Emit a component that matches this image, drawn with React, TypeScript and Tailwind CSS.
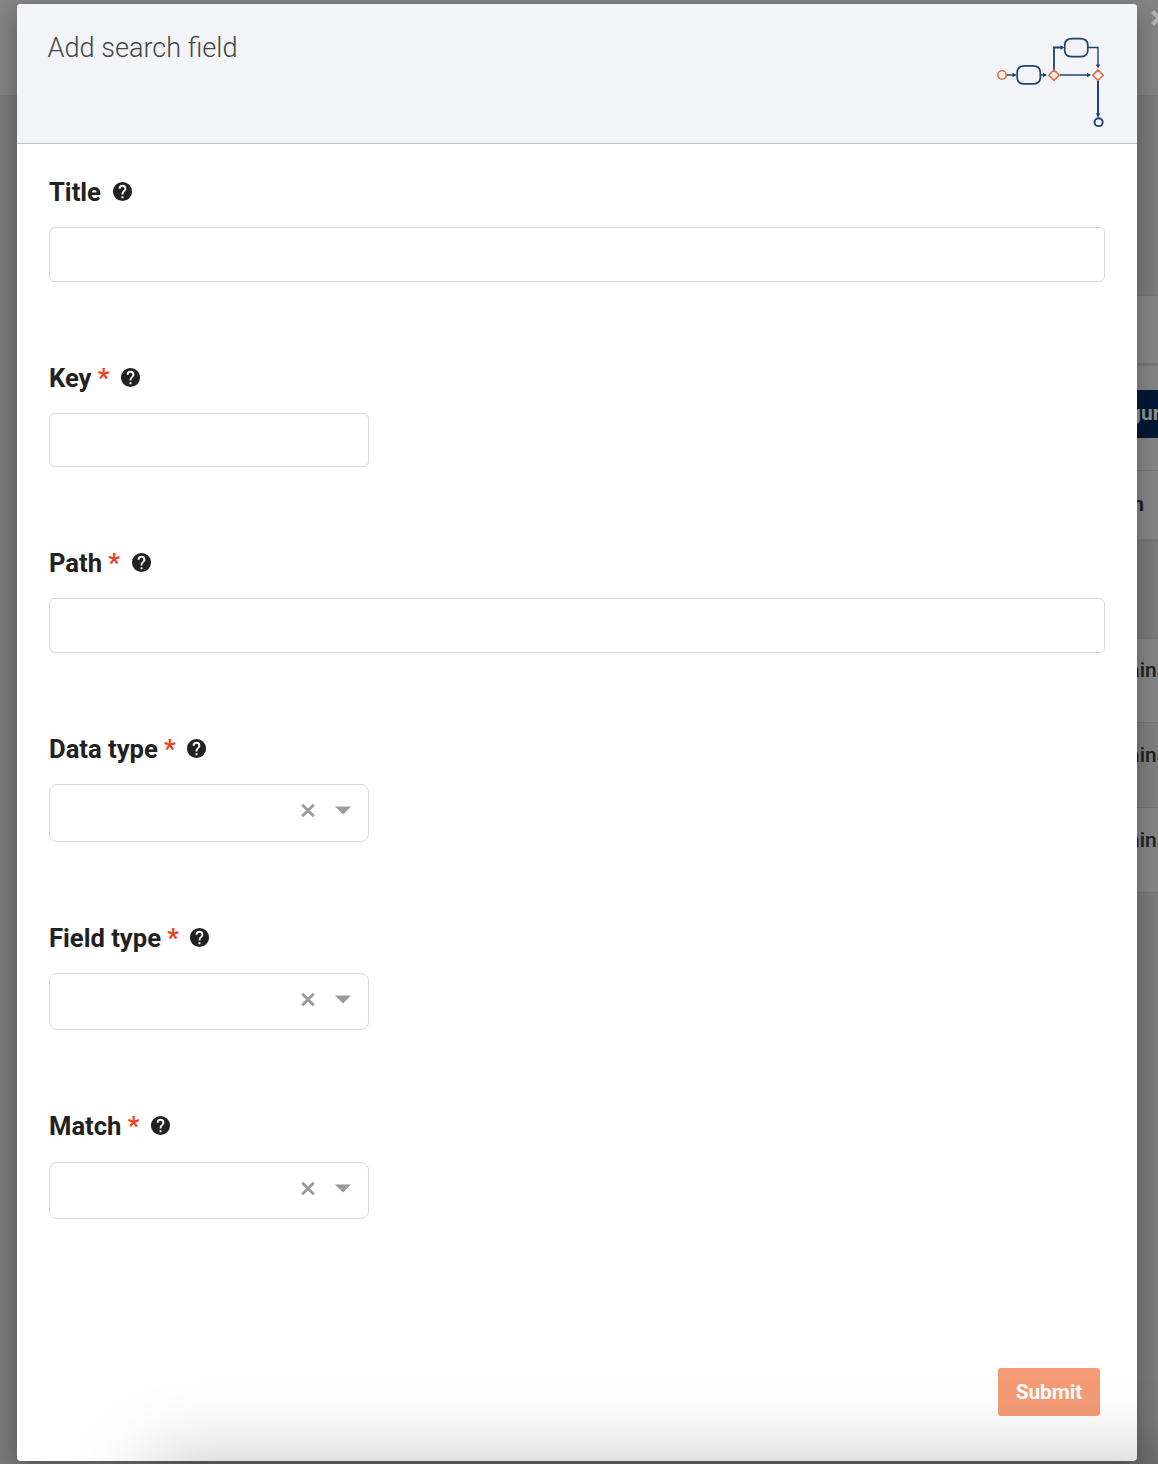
import React from "react";

type Field = {
  label: string;
  required?: boolean;
  kind: "wide" | "short" | "select";
  block: string;
  box: string;
};

const fields: Field[] = [
  { label: "Title", kind: "wide", block: "h-[186px]", box: "h-[55px]" },
  { label: "Key", required: true, kind: "short", block: "h-[185px]", box: "h-[54px]" },
  { label: "Path", required: true, kind: "wide", block: "h-[186px]", box: "h-[55px]" },
  { label: "Data type", required: true, kind: "select", block: "h-[189px]", box: "h-[58px]" },
  { label: "Field type", required: true, kind: "select", block: "h-[188px]", box: "h-[57px]" },
  { label: "Match", required: true, kind: "select", block: "h-[181px]", box: "h-[57px] mt-px" },
];

function HelpIcon() {
  return (
    <svg viewBox="0 0 24 24" className="size-[23px] shrink-0" fill="#212121">
      <path d="M15.07 11.25l-.9.92C13.45 12.89 13 13.5 13 15h-2v-.5c0-1.11.45-2.11 1.17-2.83l1.24-1.26c.37-.36.59-.86.59-1.41a2 2 0 1 0-4 0H8a4 4 0 1 1 8 0c0 .88-.36 1.67-.93 2.25M13 19h-2v-2h2M12 2a10 10 0 1 0 0 20 10 10 0 0 0 0-20Z" />
    </svg>
  );
}

function FlowLogo() {
  return (
    <svg viewBox="0 0 112 96" className="h-[96px] w-[112px]" fill="none">
      <g stroke="#1d4172">
        <path d="M10.500 41h9M45 41h5M64 41h30" strokeWidth="1.4" />
        <path d="M58 36V13.500h7" strokeWidth="1.8" />
        <path d="M92 13.500h10V32" strokeWidth="1.4" />
        <path d="M102 46.500v35" strokeWidth="2" />
        <path d="M29 31.900h7.500q7.800 0 7.800 6.500v5q0 6.500-7.800 6.500h-7.500q-7.800 0-7.800-6.500v-5q0-6.500 7.800-6.500Z" strokeWidth="1.7" />
        <path d="M76.500 4.700h7.500q7.800 0 7.800 6.500v5q0 6.500-7.800 6.500h-7.500q-7.800 0-7.800-6.500v-5q0-6.500 7.800-6.500Z" strokeWidth="1.700" />
        <ellipse cx="102.600" cy="88.200" rx="4.100" ry="3.900" strokeWidth="1.900" />
      </g>
      <g fill="#1d4172">
        <path d="M16.500 38.800l4 2.200-4 2.200ZM47 38.800l4 2.200-4 2.200ZM91 38.800l4 2.200-4 2.200ZM64.500 11.300l4 2.200-4 2.200ZM99.800 30.500h4.400l-2.200 4ZM99.800 79.500h4.400l-2.200 4Z" />
      </g>
      <g stroke="#e2703f" strokeWidth="1.6">
        <circle cx="6" cy="41" r="4.200" />
        <path d="M58 36l5.200 5.200-5.200 5.200-5.200-5.200ZM102 36l5.200 5.200-5.200 5.200-5.200-5.200Z" />
      </g>
    </svg>
  );
}

function FormField({ field }: { field: Field }) {
  return (
    <div className={`flex flex-col items-start ${field.block}`}>
      <div className="flex h-[51px] w-full shrink-0 items-start text-[25.6px] leading-[32px] font-bold text-[#212121]">
        <span>{field.label}</span>
        {field.required && <span className="ml-[6.2px] text-[#f1401f]">*</span>}
        <span className="ml-[9.7px] flex h-[31px] items-center">
          <HelpIcon />
        </span>
      </div>
      {field.kind === "select" ? (
        <div
          className={`flex w-[320px] shrink-0 items-start justify-end rounded-[8px] border border-[#d9d9d9] bg-white pt-[17px] pr-[17px] ${field.box}`}
        >
          <svg viewBox="0 0 16 16" className="mr-[19.5px] size-4" stroke="#9b9b9b" strokeWidth="2.8" fill="none">
            <path d="M2.200 2.700l11.600 11.600M13.800 2.700L2.200 14.300" />
          </svg>
          <svg viewBox="0 0 16 16" className="size-4" fill="#9b9b9b">
            <path d="M0 4.500h16l-8 8Z" />
          </svg>
        </div>
      ) : (
        <input
          type="text"
          aria-label={field.label}
          className={`rounded-[6px] border border-[#d9d9d9] bg-white px-4 ${field.kind === "wide" ? "w-full" : "w-[320px]"} ${field.box}`}
        />
      )}
    </div>
  );
}

function PageBehind() {
  return (
    <div className="flex h-full flex-col bg-[#7b7b7b] text-[21px] text-[#202020]">
      <div className="flex h-[96px] justify-end border-b border-[#757575] bg-[#848484] pt-[10px]">
        <svg viewBox="0 0 16 16" className="-mr-[9px] size-4" stroke="#b3b3b3" strokeWidth="4" fill="none">
          <path d="M1.500 1.500l13 13M14.500 1.500l-13 13" />
        </svg>
      </div>
      <div className="ml-[60px] flex flex-col pt-[199px]">
        <div className="h-[71px] border-t border-b-[3px] border-[#777777] bg-[#868686]" />
        <div className="flex h-[104px] flex-col items-end bg-[#868686] pt-[24px]">
          <div className="flex h-[48px] w-[30px] items-center overflow-hidden bg-[#041835] pl-[1px] font-bold text-[#929292]">
            gur
          </div>
        </div>
        <div className="flex h-[72px] items-center justify-end border-t border-b-[3px] border-[#777777] bg-[#868686] pr-[14px] font-bold">
          n
        </div>
        <div className="h-[95px]" />
        <div className="flex h-[86px] items-center justify-end border-t-2 border-b border-[#757575] bg-[#868686] pb-[19px] font-medium">
          <span className="-mr-[9.5px]">ains</span>
        </div>
        <div className="flex h-[85px] items-center justify-end border-b border-[#757575] bg-[#7f7f7f] pb-[18px] font-medium">
          <span className="-mr-[9.5px]">ains</span>
        </div>
        <div className="flex h-[85px] items-center justify-end border-b border-[#757575] bg-[#868686] pb-[18px] font-medium">
          <span className="-mr-[9.5px]">ains</span>
        </div>
      </div>
    </div>
  );
}

export default function App() {
  return (
    <div className="relative h-[1464px] w-full overflow-hidden font-['Roboto',sans-serif]">
      <PageBehind />

      <div className="absolute inset-0 flex flex-col pt-[4px] pr-[21px] pb-[3px] pl-[17px]">
        <div
          role="dialog"
          className="flex flex-1 flex-col overflow-hidden rounded-[4px] bg-white shadow-[0_8px_24px_0_rgba(0,0,0,0.33)]"
        >
          <header className="flex h-[140px] shrink-0 items-start justify-between border-b border-[#bfc2ca] bg-[#f2f4f8] pr-[29px] pl-[30.5px]">
            <h1 className="mt-[27px] text-[27.100px] leading-[34px] font-light text-[#444]">Add search field</h1>
            <div className="mt-[30px]">
              <FlowLogo />
            </div>
          </header>
          <form className="flex flex-1 flex-col px-[32px] pt-[32px]">
            {fields.map((f) => (
              <FormField key={f.label} field={f} />
            ))}
            <div className="mt-[77px] flex justify-end pr-[5px]">
              <button
                type="button"
                className="h-[48px] w-[102px] rounded-[3px] bg-[#f49b76] pt-[2px] text-[20.8px] font-bold text-white"
              >
                Submit
              </button>
            </div>
          </form>
        </div>
      </div>

      <div className="pointer-events-none absolute top-full -right-[150px] left-[150px] h-[200px] shadow-[0_0_80px_rgba(0,0,0,0.25)]" />
    </div>
  );
}
